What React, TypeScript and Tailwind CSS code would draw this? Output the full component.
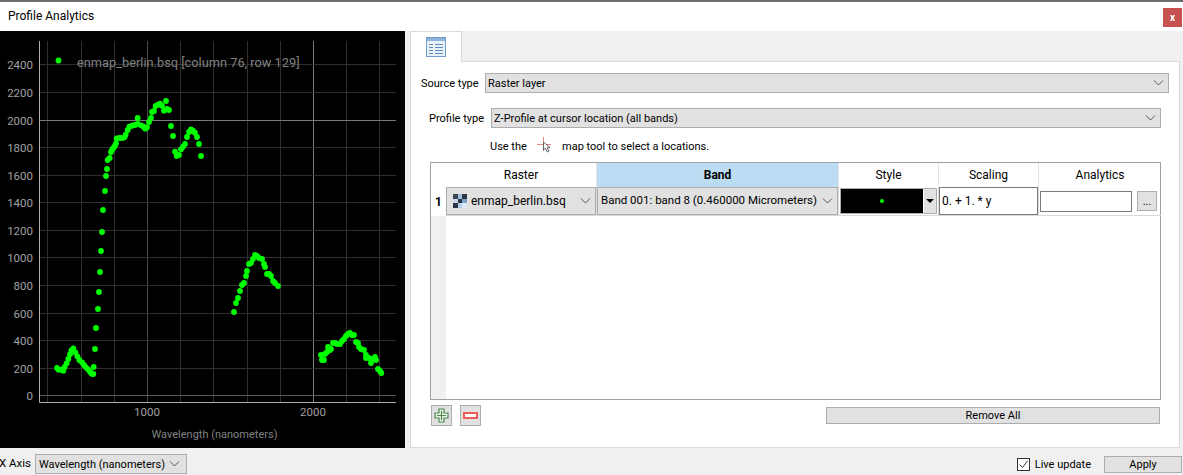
import React from "react";

const z1 = [[306,696],[309,630],[315,573]].map(([x,y])=>[x/3,y/3]);
const z8 = [[228,258],[231,237],[233,210],[239,204],[243,186],[246,180],[250,174],[255,167],[258,160],[260,145],[268,144],[276,144],[283,142],[287,134],[293,120],[298,110],[306,107],[315,105],[323,102],[323,84],[333,106],[341,110],[346,116],[351,112],[357,96],[363,84],[366,66],[372,63],[377,48],[384,44],[390,41],[396,47],[402,62],[408,33],[411,57],[417,60],[423,108],[429,138],[435,185],[440,198],[447,195],[453,178],[459,170],[465,162],[471,141],[477,126],[483,118],[489,122],[495,128],[501,141],[507,162],[513,198]].map(([x,y])=>[30+x/3,90+y/3]);
const z2 = [[171,399],[176,404],[183,404],[190,407],[194,396],[200,385],[205,372],[210,358],[214,346],[220,340],[226,352],[232,364],[238,375],[246,382],[252,390],[258,397],[264,403],[270,410],[275,416],[280,417],[281,396],[285,342],[288,279],[294,222],[297,171],[300,111],[303,48],
[702,231],[708,204],[714,189],[720,168],[726,150],[732,144],[738,123],[741,108],[747,87],[753,84],[759,72],[765,60],[771,63],[777,69],[786,72],[792,87],[795,96],[801,117],[807,117],[813,123],[819,138],[825,144],[834,153],
[963,360],[966,375],[972,375],[975,357],[981,351],[984,336],[990,345],[993,342],[999,324],[1005,324],[1011,327],[1020,327],[1026,318],[1032,312],[1038,303],[1044,297],[1050,294],[1056,300],[1062,300],[1068,321],[1074,324],[1077,336],[1083,342],[1092,345],[1098,360],[1098,369],[1107,369],[1113,384],[1117,372],[1125,366],[1128,375],[1134,402],[1140,408],[1144,414]].map(([x,y])=>[x/3,235+y/3]);
const points = [...z1, ...z8, ...z2];

const yTicks: [string, number][] = [["2400",64.5],["2200",92.5],["2000",120.5],["1800",147.5],["1600",175.5],["1400",202.5],["1200",230.5],["1000",257.5],["800",285.5],["600",313.5],["400",340.5],["200",368.5],["0",395.5]];
const xGrid = [47.5,81.5,114.5,147.5,180.5,213.5,247.5,280.5,313.5,346.5,379.5];

function Plot() {
  return (
    <svg width="405" height="417" viewBox="0 31 405 417" className="block shrink-0 bg-black" style={{fontFamily:'Roboto,sans-serif'}}>
      {xGrid.map(x => (
        <line key={x} x1={x} x2={x} y1="41" y2="402" stroke={x===313.5?"#7a7a7a":x===147.5?"#4a4a4a":"#2f2f2f"} />
      ))}
      {yTicks.map(([t,y]) => (
        <line key={t} x1="40" x2="396" y1={y} y2={y} stroke={t==="2000"?"#7a7a7a":t==="0"?"#5a5a5a":"#2f2f2f"} />
      ))}
      <path d="M39.5 41V402.5H396" fill="none" stroke="#b0b0b0" />
      {yTicks.map(([t,y]) => (
        <text key={t} x="33" y={y+4.5} textAnchor="end" fontSize="11.5" fill="#a0a0a0">{t}</text>
      ))}
      <text x="147" y="415.500" textAnchor="middle" fontSize="11.5" fill="#a0a0a0">1000</text>
      <text x="313" y="415.500" textAnchor="middle" fontSize="11.5" fill="#a0a0a0">2000</text>
      <text x="214.500" y="437.500" textAnchor="middle" fontSize="11" fill="#808080">Wavelength (nanometers)</text>
      <circle cx="58.500" cy="60.500" r="2.900" fill="#00ff00" />
      <text x="77" y="66.500" fontSize="12.800" fill="#808080">enmap_berlin.bsq [column 76, row 129]</text>
      {points.map(([x,y],i) => <circle key={i} cx={x} cy={y} r="2.900" fill="#00ff00" />)}
    </svg>
  );
}

function Chevron({ className = "" }: { className?: string }) {
  return (
    <svg width="11" height="6" viewBox="0 0 11 6" className={"shrink-0 " + className}>
      <path d="M1 .5l4.500 4.500L10 .5" fill="none" stroke="#555" strokeWidth="1" />
    </svg>
  );
}

function Combo({ label, className = "" }: { label: string; className?: string }) {
  return (
    <div className={"flex items-center justify-between bg-[#e1e1e1] border border-[#adadad] pl-[2px] pr-[4px] whitespace-nowrap " + className}>
      <span>{label}</span>
      <Chevron />
    </div>
  );
}

function TableIcon() {
  return (
    <svg width="20" height="20" viewBox="0 0 20 20">
      <rect x=".5" y=".5" width="19" height="19" fill="#e8f0f8" stroke="#6f9bcb" />
      <rect x="1" y="1" width="18" height="3" fill="#8fb2d8" />
      <path d="M3 7.500h4M9 7.500h8M3 10.500h4M9 10.500h8M3 13.500h4M9 13.500h8M3 16.500h4M9 16.500h8" stroke="#5f8dc0" fill="none" />
    </svg>
  );
}

function CursorIcon() {
  return (
    <svg width="18" height="18" viewBox="0 0 18 18" className="shrink-0">
      <path d="M0 7.500h6M9 7.500h5M6.500 0v5M6.500 9v5" stroke="#eb8a8a" fill="none" />
      <path d="M6.500 5l0 8 2-1.800 1.800 3.800 1.600-.8-1.700-3.500 2.800-.2z" fill="#fff" stroke="#555" strokeWidth=".9" />
    </svg>
  );
}

function RasterIcon() {
  return (
    <svg width="14" height="14" viewBox="0 0 14 14" className="shrink-0">
      <rect x="0" y="0" width="14" height="14" fill="#fff" />
      <rect x="0" y="0" width="5" height="5" fill="#3a4658" />
      <rect x="5" y="0" width="4" height="5" fill="#9fbfe0" />
      <rect x="9" y="0" width="5" height="5" fill="#2b3546" />
      <rect x="0" y="5" width="5" height="4" fill="#c6d8ea" />
      <rect x="5" y="5" width="4" height="4" fill="#2b3546" />
      <rect x="9" y="5" width="5" height="4" fill="#7fa4cc" />
      <rect x="0" y="9" width="5" height="5" fill="#2b3546" />
      <rect x="5" y="9" width="4" height="5" fill="#b5cce4" />
      <rect x="9" y="9" width="5" height="5" fill="#dce8f3" />
    </svg>
  );
}

function Header({ label, className = "" }: { label: string; className?: string }) {
  return <div className={"flex items-center justify-center border-r border-[#e3e3e3] text-[12px] " + className}>{label}</div>;
}

export default function App() {
  return (
    <div className="w-[1183px] h-[475px] overflow-hidden flex flex-col bg-[#f0f0f0] text-[11px] leading-none text-black" style={{fontFamily:'Roboto,sans-serif'}}>
      <div className="h-[31px] shrink-0 bg-white border-t-2 border-[#6e6e6e] flex items-center justify-between pl-[8px] pr-[1px]">
        <span className="text-[12px] -mt-[1px]">Profile Analytics</span>
        <div className="w-[19px] h-[19px] bg-[#c75050] flex items-center justify-center text-white font-bold text-[10px] leading-none mt-[2px]">x</div>
      </div>

      <div className="h-[417px] shrink-0 flex">
        <Plot />
        <div className="w-[5px] shrink-0" />
        <div className="flex-1 flex flex-col min-w-0 mr-[3px]">
          <div className="h-[31px] shrink-0 flex border-b border-[#d9d9d9]">
            <div className="w-[52px] h-[31px] bg-white border-l border-r border-t border-[#d9d9d9] flex items-center justify-center pb-[1px]">
              <TableIcon />
            </div>
          </div>
          <div className="flex-1 bg-white border-l border-b border-r border-[#d9d9d9] pt-[11px] flex flex-col">
            <div className="flex items-center h-[20px] pl-[10px]">
              <span className="w-[64px] shrink-0 whitespace-nowrap">Source type</span>
              <Combo label="Raster layer" className="w-[684px] h-[20px]" />
            </div>
            <div className="flex items-center h-[20px] mt-[15px] pl-[18px]">
              <span className="w-[62px] shrink-0 whitespace-nowrap">Profile type</span>
              <Combo label="Z-Profile at cursor location (all bands)" className="w-[670px] h-[20px]" />
            </div>
            <div className="flex items-center h-[18px] mt-[9px] pl-[79px] whitespace-nowrap">
              <span className="w-[47px]">Use the</span>
              <CursorIcon />
              <span className="ml-[7px]">map tool to select a locations.</span>
            </div>
            <div className="ml-[19px] mt-[7px] w-[731px] h-[238px] shrink-0 border border-[#a0a0a0] flex bg-white">
              <div className="w-[15px] shrink-0 bg-[#f0f0f0] flex flex-col">
                <div className="h-[24px] bg-white" />
                <div className="h-[29px] bg-white flex items-center justify-center font-bold text-[12px]">1</div>
              </div>
              <div className="flex-1 grid grid-cols-[151px_242px_100px_100px_122px] grid-rows-[24px_29px] items-stretch content-start">
                <Header label="Raster" />
                <Header label="Band" className="bg-[#bcdcf4] font-bold" />
                <Header label="Style" />
                <Header label="Scaling" />
                <Header label="Analytics" className="border-r-0" />
                <div className="border-b border-r border-[#d9d9d9]">
                  <div className="h-[28px] bg-[#e1e1e1] border border-[#adadad] flex items-center justify-between pl-[6px] pr-[4px] whitespace-nowrap text-[12px]">
                    <span className="flex items-center gap-[4px]"><RasterIcon />enmap_berlin.bsq</span>
                    <Chevron />
                  </div>
                </div>
                <div className="border-b border-r border-[#d9d9d9]">
                  <div className="h-[28px] bg-[#e1e1e1] border border-[#adadad] flex items-center justify-between pl-[3px] pr-[4px] whitespace-nowrap text-[11.500px]">
                    <span>Band 001: band 8 (0.460000 Micrometers)</span>
                    <Chevron />
                  </div>
                </div>
                <div className="border-b border-r border-[#d9d9d9] p-[1px]">
                  <div className="h-[26px] flex bg-[#e1e1e1] border border-[#adadad]">
                    <div className="w-[83px] bg-black flex items-center justify-center border-r border-white">
                      <div className="w-[4px] h-[4px] rounded-full bg-[#00ff00]" />
                    </div>
                    <div className="flex-1 flex items-center justify-center">
                      <div className="w-0 h-0 border-l-[4px] border-r-[4px] border-t-[4px] border-l-transparent border-r-transparent border-t-black" />
                    </div>
                  </div>
                </div>
                <div className="border-b border-r border-[#d9d9d9]">
                  <div className="h-[28px] border border-[#7a7a7a] flex items-center px-[2px] whitespace-nowrap text-[12px]">0. + 1. * y</div>
                </div>
                <div className="border-b border-[#d9d9d9] flex items-center pl-[1px] pr-[4px] justify-between">
                  <div className="w-[92px] h-[21px] border border-[#7a7a7a]" />
                  <div className="w-[20px] h-[20px] bg-[#e1e1e1] border border-[#adadad] flex items-center justify-center leading-none">...</div>
                </div>
              </div>
            </div>
            <div className="flex items-center mt-[5px] ml-[20px] w-[729px] h-[21px]">
              <div className="w-[21px] h-[21px] bg-[#e1e1e1] border border-[#adadad] flex items-center justify-center">
                <svg width="15" height="15" viewBox="0 0 15 15">
                  <path d="M5 1h5v4h4v5h-4v4H5v-4H1V5h4z" fill="#e9f3e6" stroke="#4e8a50" strokeWidth="1.200" />
                  <path d="M7.500 3v9M3 7.500h9" stroke="#4e8a50" strokeWidth="1.200" />
                </svg>
              </div>
              <div className="ml-[8px] w-[21px] h-[21px] bg-[#e1e1e1] border border-[#adadad] flex items-center justify-center">
                <div className="w-[15px] h-[7px] bg-white border-2 border-[#f05a5a]" />
              </div>
              <div className="ml-auto w-[334px] h-[17px] bg-[#e1e1e1] border border-[#adadad] flex items-center justify-center">Remove All</div>
            </div>
          </div>
        </div>
      </div>

      <div className="flex-1 flex items-center pr-[1px] -ml-[1px]">
        <span className="w-[36px] shrink-0 whitespace-nowrap mt-[5px] text-[11.500px]">X Axis</span>
        <div className="w-[152px] h-[20px] mt-[5px] flex items-center justify-between bg-[#e1e1e1] border border-[#adadad] pl-[3px] pr-[6px] whitespace-nowrap">
          <span>Wavelength (nanometers)</span>
          <Chevron />
        </div>
        <div className="ml-auto flex items-center mt-[5px]">
          <div className="w-[13px] h-[13px] border border-[#333] bg-white flex items-center justify-center">
            <svg width="11" height="11" viewBox="0 0 11 11"><path d="M1.500 5.500l3 3 5-6.500" fill="none" stroke="#333" strokeWidth="1" /></svg>
          </div>
          <span className="ml-[5px] whitespace-nowrap">Live update</span>
          <div className="ml-[13px] w-[78px] h-[17px] bg-[#e1e1e1] border border-[#adadad] flex items-center justify-center">Apply</div>
        </div>
      </div>
    </div>
  );
}
